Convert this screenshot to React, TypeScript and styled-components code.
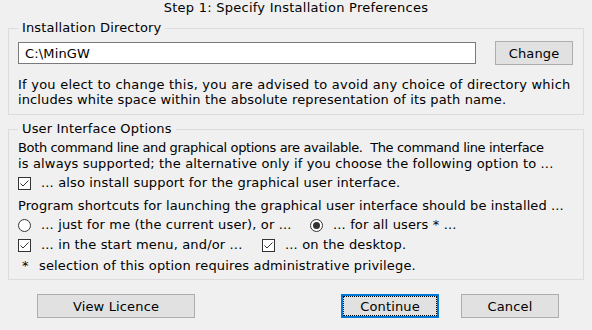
import React from "react";
import styled, { createGlobalStyle } from "styled-components";

const GlobalStyle = createGlobalStyle`
  html, body {
    margin: 0;
    padding: 0;
    background: #f0f0f0;
  }
  body {
    font-family: "DejaVu Sans", Verdana, sans-serif;
    font-size: 13px;
    letter-spacing: 0.15px;
    color: #000;
  }
`;

const Window = styled.div`
  width: 592px;
  height: 330px;
  box-sizing: border-box;
  padding: 0 8px;
  display: flex;
  flex-direction: column;
  background: #f0f0f0;
`;

const Title = styled.div`
  height: 20px;
  line-height: 16px;
  text-align: center;
  letter-spacing: 0.25px;
`;

const Group = styled.fieldset<{ $mt?: number; $pb?: number }>`
  margin: ${(p) => p.$mt ?? 0}px 0 0;
  padding: 0 9px ${(p) => p.$pb ?? 6}px;
  border: 1px solid #dcdcdc;
  min-width: 0;
  display: flex;
  flex-direction: column;
`;

const Legend = styled.legend`
  padding: 0 4px;
  line-height: 16px;
`;

const InputRow = styled.div`
  display: flex;
  align-items: center;
  gap: 19px;
  margin-top: 5px;
  padding-right: 1px;
`;

const PathInput = styled.input`
  flex: 1;
  height: 22px;
  box-sizing: border-box;
  border: 1px solid #7a7a7a;
  background: #fff;
  padding: 0 6px;
  font: inherit;
  letter-spacing: inherit;
  color: #000;
  outline: none;
`;

const Button = styled.button<{ $w: number; $focus?: boolean }>`
  position: relative;
  width: ${(p) => p.$w}px;
  height: 24px;
  box-sizing: border-box;
  border: ${(p) => (p.$focus ? "2px solid #0078d7" : "1px solid #adadad")};
  background: #e1e1e1;
  font: inherit;
  letter-spacing: inherit;
  color: #000;
  padding: 0;
  cursor: pointer;

  &::after {
    content: "";
    display: ${(p) => (p.$focus ? "block" : "none")};
    position: absolute;
    inset: 0;
    border: 1px dotted #000;
  }
`;

const Line = styled.div<{ $mt?: number; $lh?: number; $ls?: number }>`
  margin-top: ${(p) => p.$mt ?? 0}px;
  line-height: ${(p) => p.$lh ?? 16}px;
  white-space: pre;
  ${(p) => (p.$ls !== undefined ? `letter-spacing: ${p.$ls}px;` : "")}
`;

const OptionRow = styled.div<{ $mt?: number }>`
  display: flex;
  align-items: center;
  margin-top: ${(p) => p.$mt ?? 0}px;
  line-height: 16px;
  white-space: pre;
`;

const Option = styled.label<{ $w?: number }>`
  display: flex;
  align-items: center;
  gap: 10px;
  ${(p) => (p.$w ? `width: ${p.$w}px;` : "")}
`;

const Mark = styled.svg`
  flex: none;
  display: block;
`;

const Star = styled.span`
  width: 21px;
  padding-left: 4px;
  box-sizing: border-box;
`;

const ButtonRow = styled.div`
  display: flex;
  gap: 22px;
  margin-top: 14px;
  padding: 0 25px 0 29px;
`;

const Spacer = styled.div`
  flex: 1;
  margin-right: -22px;
`;

function CheckBox() {
  return (
    <Mark width="13" height="13" viewBox="0 0 13 13">
      <rect x="0.5" y="0.5" width="12" height="12" fill="#fff" stroke="#333" />
      <path d="M2.5 6.5 L5 9 L10.5 3.5" fill="none" stroke="#333" strokeWidth="1" />
    </Mark>
  );
}

function Radio({ on }: { on?: boolean }) {
  return (
    <Mark width="13" height="13" viewBox="0 0 13 13">
      <circle cx="6.5" cy="6.5" r="6" fill="#fff" stroke="#333" />
      {on && <circle cx="6.5" cy="6.5" r="3.5" fill="#333" />}
    </Mark>
  );
}

export default function App() {
  return (
    <Window>
      <GlobalStyle />
      <Title>Step 1: Specify Installation Preferences</Title>

      <Group $pb={7}>
        <Legend>Installation Directory</Legend>
        <InputRow>
          <PathInput defaultValue="C:\MinGW" />
          <Button $w={78}>Change</Button>
        </InputRow>
        <Line $mt={12} $lh={15} $ls={0.23}>
          If you elect to change this, you are advised to avoid any choice of directory which
        </Line>
        <Line $lh={15} $ls={0.12}>
          includes white space within the absolute representation of its path name.
        </Line>
      </Group>

      <Group $mt={6} $pb={5}>
        <Legend>User Interface Options</Legend>
        <Line $mt={3} $ls={-0.36}>
          {"Both command line and graphical options are available.  The command line interface"}
        </Line>
        <Line>
          is always supported; the alternative only if you choose the following option to ...
        </Line>
        <OptionRow $mt={3}>
          <Option>
            <CheckBox />
            ... also install support for the graphical user interface.
          </Option>
        </OptionRow>
        <Line $mt={7} $ls={0.1}>
          Program shortcuts for launching the graphical user interface should be installed ...
        </Line>
        <OptionRow $mt={3}>
          <Option $w={292}>
            <Radio />
            ... just for me (the current user), or ...
          </Option>
          <Option>
            <Radio on />
            ... for all users * ...
          </Option>
        </OptionRow>
        <OptionRow $mt={4}>
          <Option $w={244}>
            <CheckBox />
            ... in the start menu, and/or ...
          </Option>
          <Option>
            <CheckBox />
            ... on the desktop.
          </Option>
        </OptionRow>
        <OptionRow $mt={5}>
          <Star>*</Star>
          selection of this option requires administrative privilege.
        </OptionRow>
      </Group>

      <ButtonRow>
        <Button $w={158}>View Licence</Button>
        <Spacer />
        <Button $w={98} $focus>
          Continue
        </Button>
        <Button $w={98}>Cancel</Button>
      </ButtonRow>
    </Window>
  );
}
